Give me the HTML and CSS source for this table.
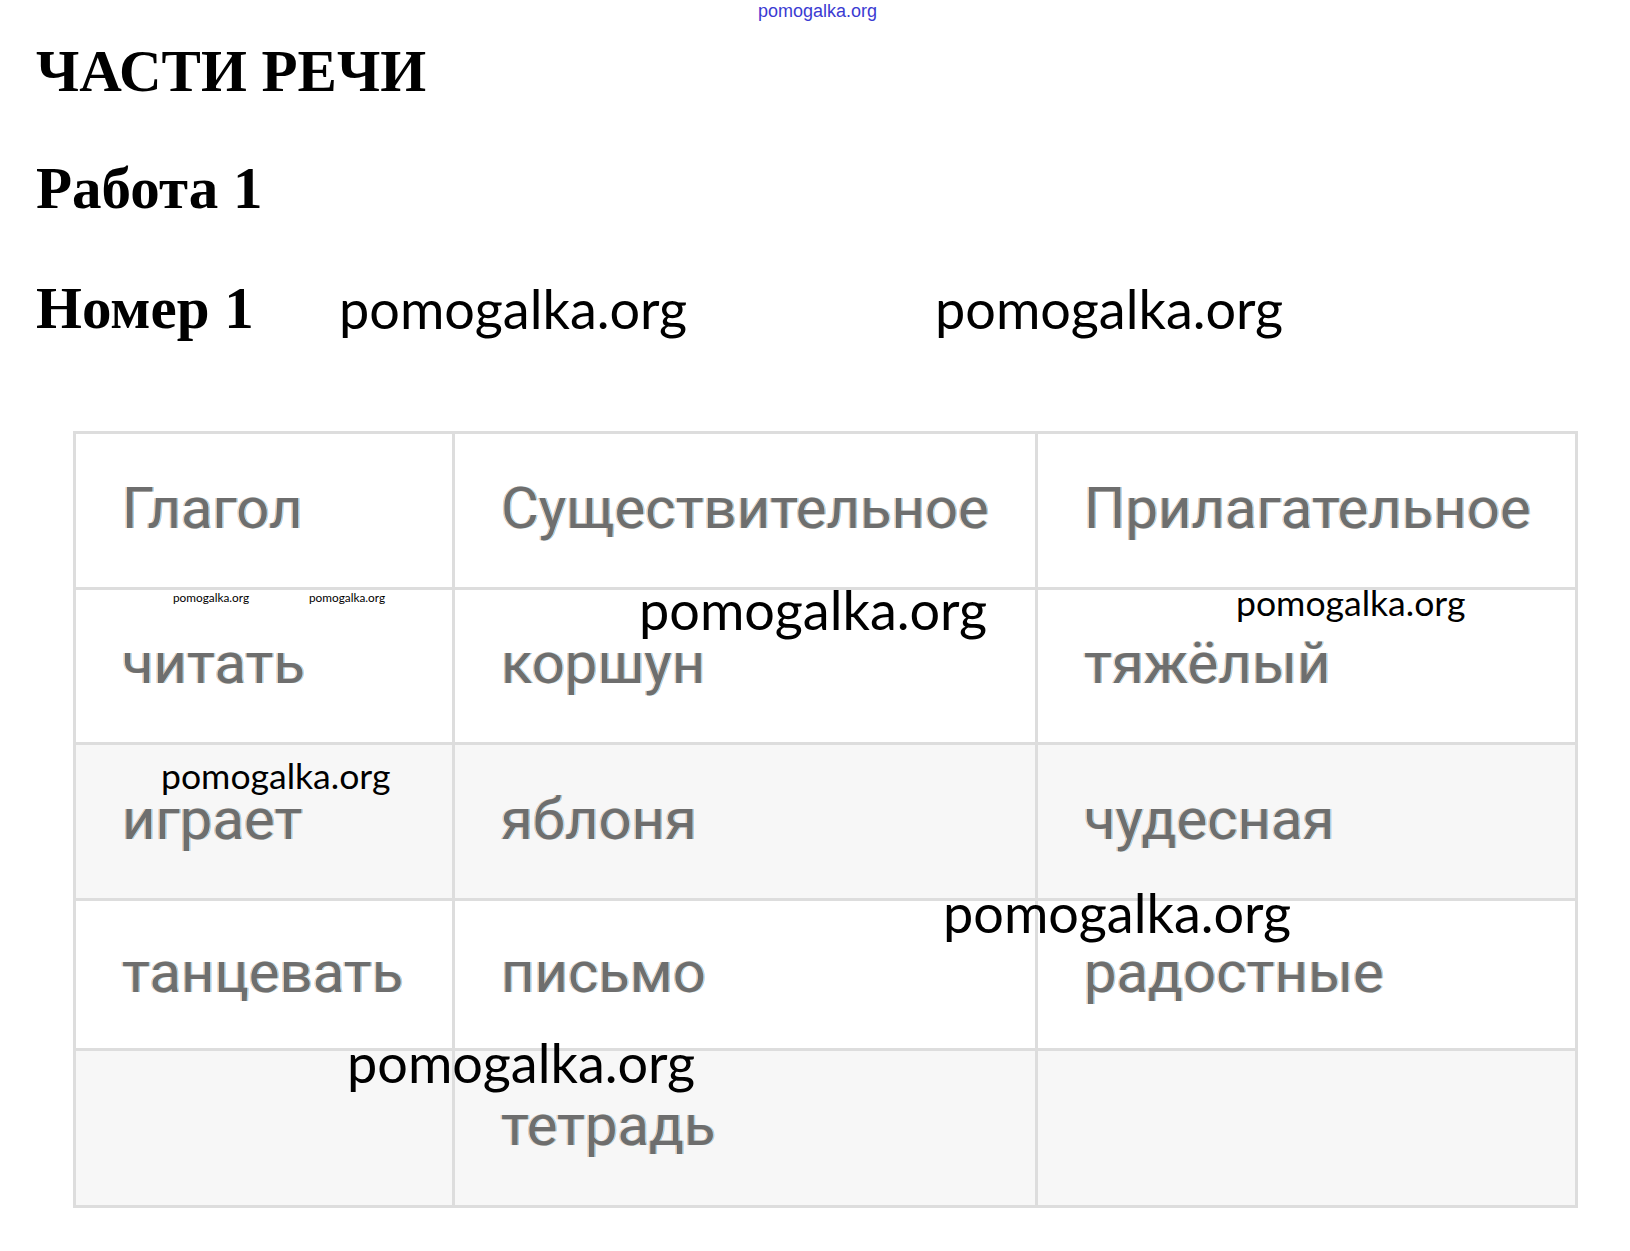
FILE: index.html
```html
<!DOCTYPE html>
<html lang="ru">
<head>
<meta charset="utf-8">
<title>Части речи</title>
<link rel="stylesheet" href="styles.css">
</head>
<body>
<div class="page">
  <div class="wm wm-top">pomogalka.org</div>

  <h1 class="title">ЧАСТИ РЕЧИ</h1>
  <h2 class="subtitle">Работа 1</h2>
  <h3 class="number">Номер 1</h3>

  <table class="parts">
    <colgroup>
      <col class="c1">
      <col class="c2">
      <col class="c3">
    </colgroup>
    <tr class="r1 light">
      <td>Глагол</td>
      <td>Существительное</td>
      <td>Прилагательное</td>
    </tr>
    <tr class="r2 light">
      <td>читать</td>
      <td>коршун</td>
      <td>тяжёлый</td>
    </tr>
    <tr class="r3 shade">
      <td>играет</td>
      <td>яблоня</td>
      <td>чудесная</td>
    </tr>
    <tr class="r4 light">
      <td>танцевать</td>
      <td>письмо</td>
      <td>радостные</td>
    </tr>
    <tr class="r5 shade">
      <td></td>
      <td>тетрадь</td>
      <td></td>
    </tr>
  </table>

  <div class="wm wm-big wm-a">pomogalka.org</div>
  <div class="wm wm-big wm-b">pomogalka.org</div>
  <div class="wm wm-big wm-c">pomogalka.org</div>
  <div class="wm wm-big wm-d">pomogalka.org</div>
  <div class="wm wm-big wm-e">pomogalka.org</div>
  <div class="wm wm-mid wm-f">pomogalka.org</div>
  <div class="wm wm-mid wm-g">pomogalka.org</div>
  <div class="wm wm-small wm-h">pomogalka.org</div>
  <div class="wm wm-small wm-i">pomogalka.org</div>
</div>
</body>
</html>
```

FILE: styles.css
```css
html, body {
  margin: 0;
  padding: 0;
  background: #ffffff;
}

.page {
  position: relative;
  width: 1630px;
  height: 1251px;
  box-sizing: border-box;
  padding: 37px 0 0 36px;
  overflow: hidden;
}

.title,
.subtitle,
.number {
  margin: 0;
  font-family: "Liberation Serif", "Times New Roman", serif;
  font-weight: 700;
  font-size: 59px;
  line-height: 68px;
  color: #000;
}

.subtitle { margin-top: 49px; }
.number { margin-top: 52px; }

.parts {
  margin: 89px 0 0 37px;
  width: 1505px;
  table-layout: fixed;
  border-collapse: separate;
  border-spacing: 3px;
  background: #dddddd;
}

.parts .c1 { width: 376px; }
.parts .c2 { width: 580px; }
.parts .c3 { width: 537px; }

.parts td {
  padding: 0 0 6px 46px;
  vertical-align: middle;
  font-family: Roboto, "Liberation Sans", sans-serif;
  font-size: 58px;
  line-height: 68px;
  color: #6e6e6e;
  white-space: nowrap;
  text-shadow: -1.5px 0 rgba(232, 170, 110, 0.55), 1.5px 0 rgba(100, 178, 230, 0.55);
}

.light td { background: #ffffff; }
.shade td { background: #f7f7f7; }

.r1 { height: 153px; }
.r2 { height: 152px; }
.r3 { height: 153px; }
.r4 { height: 147px; }
.r5 { height: 154px; }

.wm {
  position: absolute;
  white-space: nowrap;
  line-height: 1;
  font-family: Lato, "Open Sans", sans-serif;
  color: #000;
}

.wm-top {
  left: 758px;
  top: 2px;
  font-family: "Liberation Sans", Arial, sans-serif;
  font-size: 18px;
  color: #3b3bd2;
}

.wm-big { font-size: 54px; }
.wm-mid { font-size: 35.6px; }
.wm-small { font-size: 11.8px; }

.wm-a { left: 339px; top: 282px; }
.wm-b { left: 935px; top: 282px; }
.wm-c { left: 639px; top: 583px; }
.wm-d { left: 943px; top: 886px; }
.wm-e { left: 347px; top: 1036px; }
.wm-f { left: 1236px; top: 585px; }
.wm-g { left: 161px; top: 758px; }
.wm-h { left: 173px; top: 592px; }
.wm-i { left: 309px; top: 592px; }
```
